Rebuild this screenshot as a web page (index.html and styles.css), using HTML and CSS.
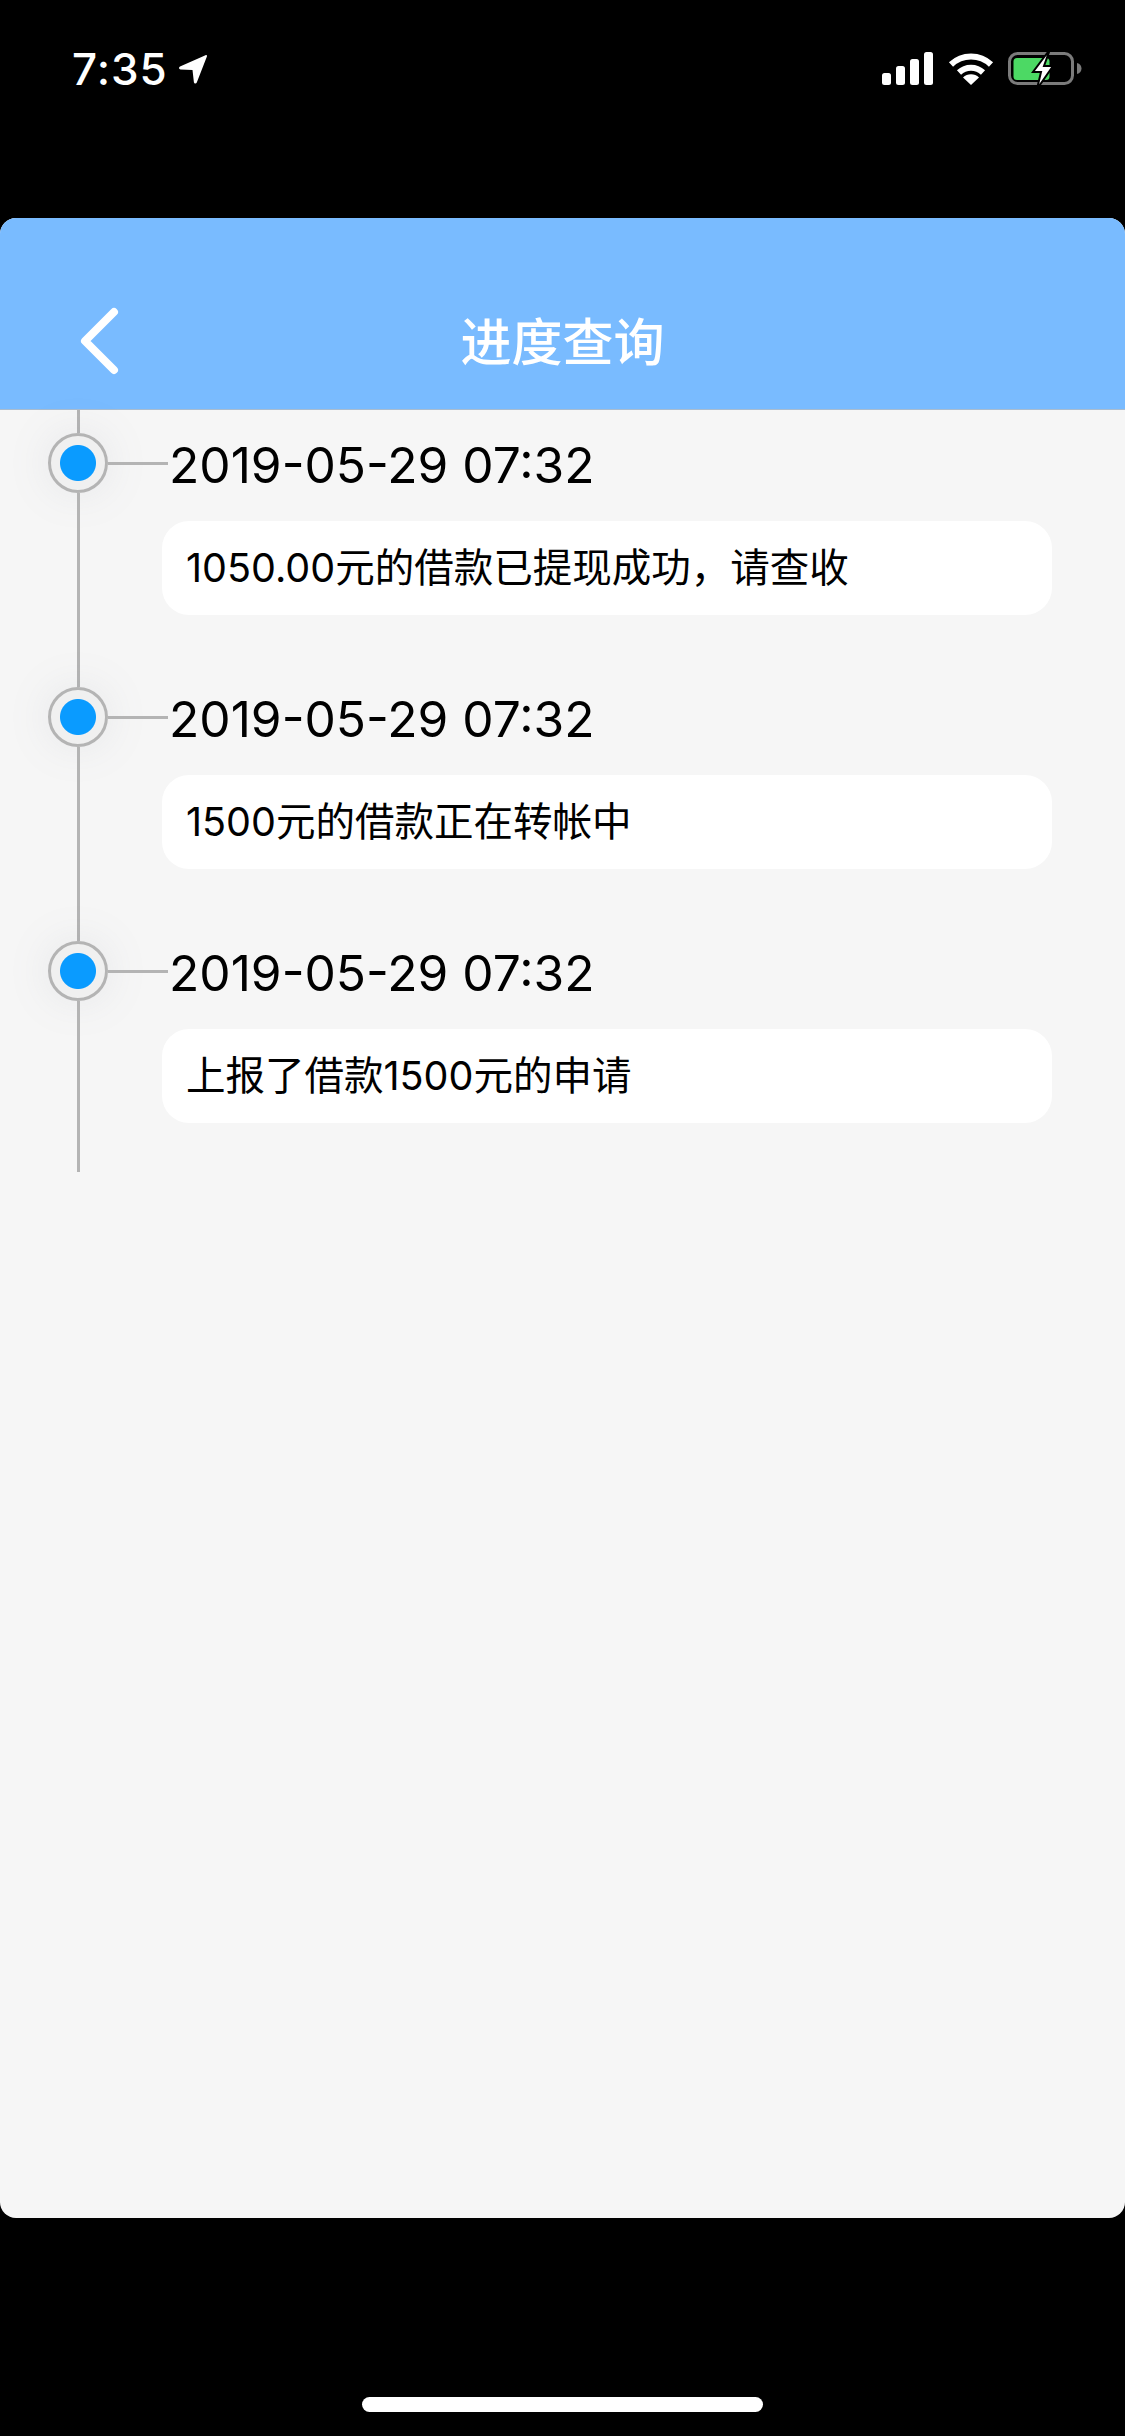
FILE: index.html
```html
<!DOCTYPE HTML>
<html lang="zh-CN">
<head>
  <meta charset="UTF-8">
  <title>进度查询</title>
  <link rel="stylesheet" href="styles.css">
</head>
<body>
  <div class="statusbar">
    <div class="status-left">
      <span class="clock">7:35</span>
      <svg class="arrow" width="32" height="32" viewBox="0 0 32 32"><path d="M3 13.500 28.500 2.200c1-.4 1.800.4 1.400 1.400L19.800 29.500c-.6 1.500-2.600 1.300-2.900-.3L15.500 17 3.500 16.500c-1.700-.1-2-2.200-.5-3z" fill="#fff"/></svg>
    </div>
    <div class="status-right">
      <svg width="52" height="33" viewBox="0 0 52 33"><g fill="#fff"><rect x="0" y="21" width="9" height="12" rx="2.500"/><rect x="14" y="14" width="9" height="19" rx="2.500"/><rect x="28" y="7" width="9" height="26" rx="2.500"/><rect x="42" y="0" width="9" height="33" rx="2.500"/></g></svg>
      <svg class="wifi" width="46" height="33" viewBox="0 0 46 33"><g fill="none" stroke="#fff" stroke-width="6"><path d="M3 12.500a29 29 0 0 1 40 0"/><path d="M11 20.500a17.500 17.500 0 0 1 24 0"/></g><path d="M23 33 15 25.500a11.500 11.500 0 0 1 16 0z" fill="#fff"/></svg>
      <svg class="battery" width="74" height="37" viewBox="0 0 74 37"><rect x="1.500" y="1.500" width="63" height="30" rx="8" fill="none" stroke="#7b7b7b" stroke-width="3"/><rect x="5.500" y="6" width="36" height="22" rx="3.500" fill="#4cd964"/><path d="M69 11c3 .5 4.500 3 4.500 5.500S72 21.500 69 22z" fill="#7b7b7b"/><path d="M40 0 25 20h8l-4 17 16-23h-9l5-14z" fill="#fff" stroke="#000" stroke-width="2"/></svg>
    </div>
  </div>

  <div class="card">
    <div class="header">
      <svg class="back" width="48" height="72" viewBox="0 0 48 72"><path d="M36 7 7 36l29 29" fill="none" stroke="#fff" stroke-width="8" stroke-linecap="round" stroke-linejoin="round"/></svg>
      <div class="title">进度查询</div>
    </div>
    <div class="timeline">
      <div class="item">
        <div class="rail"><i class="seg-top"></i><i class="dot"></i><i class="seg"></i></div>
        <div class="body">
          <div class="head"><i class="tick"></i><span class="date">2019-05-29 07:32</span></div>
          <div class="msg">1050.00元的借款已提现成功，请查收</div>
        </div>
      </div>
      <div class="item">
        <div class="rail"><i class="seg-top"></i><i class="dot"></i><i class="seg"></i></div>
        <div class="body">
          <div class="head"><i class="tick"></i><span class="date">2019-05-29 07:32</span></div>
          <div class="msg">1500元的借款正在转帐中</div>
        </div>
      </div>
      <div class="item">
        <div class="rail"><i class="seg-top"></i><i class="dot"></i><i class="seg"></i></div>
        <div class="body">
          <div class="head"><i class="tick"></i><span class="date">2019-05-29 07:32</span></div>
          <div class="msg">上报了借款1500元的申请</div>
        </div>
      </div>
    </div>
  </div>

  <div class="homebar"><div class="home-pill"></div></div>
</body>
</html>
```

FILE: styles.css
```css
html, body {
    margin: 0;
    padding: 0;
}
body {
    background-color: #000;
    display: flex;
    flex-direction: column;
    font-family: Inter, "Noto Sans CJK SC", sans-serif;
    height: 2436px;
    overflow: hidden;
    width: 1125px;
}

/* status bar */
.statusbar {
    align-items: flex-start;
    box-sizing: border-box;
    color: #fff;
    display: flex;
    height: 218px;
    justify-content: space-between;
    padding: 52px 43px 0 72px;
}
.status-left {
    align-items: center;
    display: flex;
    gap: 9px;
}
.clock {
    font-size: 44px;
    font-weight: 500;
    letter-spacing: 1px;
    line-height: 34px;
}
.status-right {
    align-items: flex-start;
    display: flex;
    gap: 14px;
}

/* card */
.card {
    background-color: #f6f6f6;
    border-radius: 16px;
    display: flex;
    flex-direction: column;
    height: 2000px;
    overflow: hidden;
}
.header {
    align-items: center;
    background-color: #79bbff;
    border-bottom: 1px solid #a9bccf;
    box-sizing: border-box;
    display: flex;
    height: 192px;
    padding: 54px 0 0 78px;
}
.title {
    color: #fff;
    flex: 1;
    font-family: "Noto Sans CJK SC", sans-serif;
    font-size: 51px;
    font-weight: 500;
    margin: 0 78px 3px -48px;
    text-align: center;
}

/* timeline */
.timeline {
    display: flex;
    flex-direction: column;
}
.item {
    display: flex;
    height: 254px;
    padding-left: 48px;
}
.rail {
    align-items: center;
    display: flex;
    flex-direction: column;
    width: 60px;
}
.seg-top {
    background-color: #b4b4b4;
    height: 23px;
    width: 3px;
}
.seg {
    background-color: #b4b4b4;
    flex: 1;
    width: 3px;
}
.dot {
    background: radial-gradient(circle, #0a9bff 17.5px, #f0f0f0 18.5px);
    border: 3px solid #b4b4b4;
    border-radius: 50%;
    box-shadow: 0 0 44px rgba(120,130,150,.13);
    box-sizing: border-box;
    height: 60px;
    width: 60px;
}
.body {
    flex: 1;
}
.head {
    align-items: center;
    display: flex;
    gap: 1px;
    height: 60px;
    margin-top: 23px;
}
.tick {
    background-color: #b4b4b4;
    height: 3px;
    width: 60px;
}
.date {
    color: #000;
    font-size: 49.7px;
    line-height: 60px;
    margin-top: 4px;
}
.msg {
    align-items: center;
    background-color: #fff;
    border-radius: 27px;
    box-sizing: border-box;
    color: #000;
    display: flex;
    font-size: 39.5px;
    height: 94px;
    margin: 28px 73px 0 54px;
    padding: 0 0 8px 24px;
}

/* home indicator */
.homebar {
    display: flex;
    justify-content: center;
    padding-top: 179px;
}
.home-pill {
    background-color: #fff;
    border-radius: 8px;
    height: 15px;
    width: 401px;
}
```
